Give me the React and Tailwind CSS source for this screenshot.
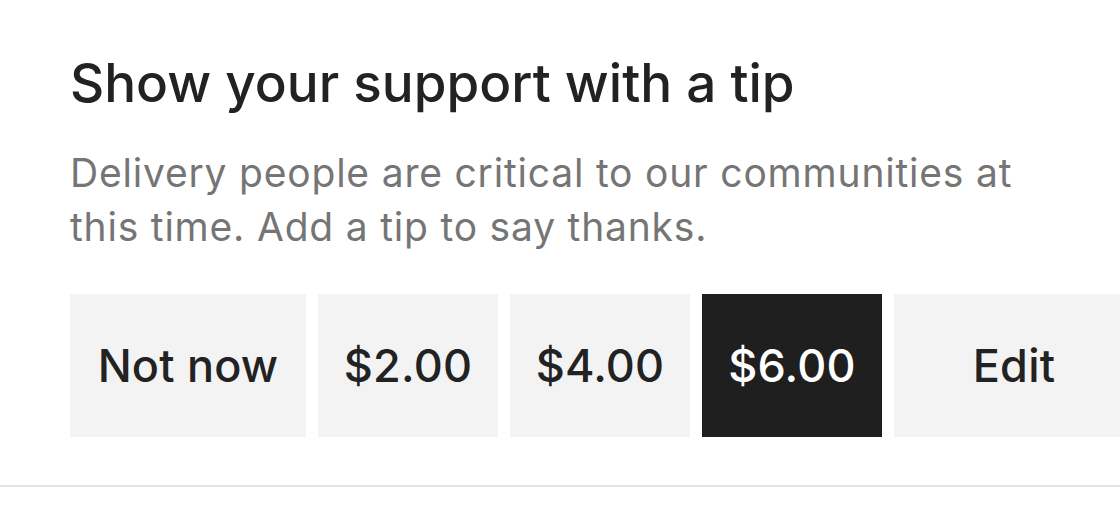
import React from 'react';

const tips = [
  { label: 'Not now', width: 'w-[236px]' },
  { label: '$2.00', width: 'w-[180px]' },
  { label: '$4.00', width: 'w-[180px]' },
  { label: '$6.00', width: 'w-[180px]', active: true },
  { label: 'Edit', width: 'w-[240px]' },
];

const App = () => {
  return (
    <div className="w-[1120px] h-[511px] overflow-hidden bg-white font-['Inter',sans-serif]">
      <div className="pl-[70px] pt-[53px]">
        <h1 className="text-[53px] leading-[60px] font-medium text-[#222222]">
          Show your support with a tip
        </h1>
        <p className="mt-[33px] w-[990px] text-[39px] leading-[54px] text-[#757575] tracking-[0.8px]">
          Delivery people are critical to our communities at this time. Add a tip to say thanks.
        </p>
        <div className="mt-[40px] flex gap-[12px]">
          {tips.map((tip) => (
            <button
              key={tip.label}
              className={`${tip.width} shrink-0 h-[143px] flex items-center justify-center text-[45px] font-medium tracking-[0.2px] ${
                tip.active ? 'bg-[#1f1f1f] text-white' : 'bg-[#f3f3f3] text-[#222222]'
              }`}
            >
              {tip.label}
            </button>
          ))}
        </div>
      </div>
      <div className="mt-[48px] h-[2px] bg-[#e2e2e2]"></div>
    </div>
  );
};

export default App;
